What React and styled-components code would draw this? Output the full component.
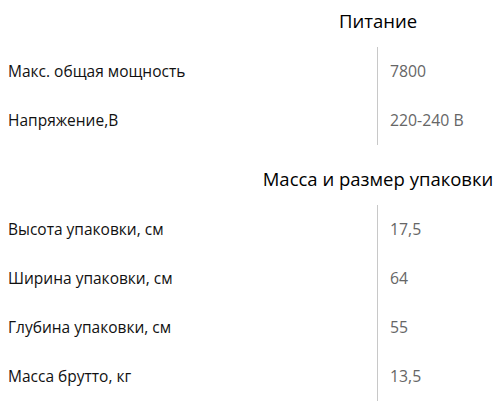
import React from "react";
import styled, { createGlobalStyle } from "styled-components";

const Global = createGlobalStyle`
  html, body { margin: 0; padding: 0; background: #fff; }
  body { font-family: "Open Sans", "Noto Sans", sans-serif; }
`;

const Page = styled.div`
  padding: 0 8px;
`;

const Section = styled.section`
  display: grid;
  grid-template-columns: 369px 1fr;
  & + & { margin-top: 13px; }
`;

const Heading = styled.h2`
  grid-column: 1 / -1;
  display: flex;
  justify-content: center;
  margin: 0;
  padding-left: 256px;
  height: 47px;
  line-height: 42px;
  font-size: 18.5px;
  font-weight: 400;
  color: #000;
  white-space: nowrap;
`;

const Label = styled.div`
  height: 49px;
  line-height: 49px;
  font-size: 15.5px;
  font-weight: 500;
  color: #111;
  white-space: nowrap;
`;

const Value = styled.div`
  height: 49px;
  line-height: 49px;
  font-size: 15.8px;
  color: #666;
  padding-left: 12px;
  border-left: 1px solid #c8c8c8;
  white-space: nowrap;
`;

const sections = [
  {
    title: "Питание",
    rows: [
      ["Макс. общая мощность", "7800"],
      ["Напряжение,В", "220-240 В"],
    ],
  },
  {
    title: "Масса и размер упаковки",
    rows: [
      ["Высота упаковки, см", "17,5"],
      ["Ширина упаковки, см", "64"],
      ["Глубина упаковки, см", "55"],
      ["Масса брутто, кг", "13,5"],
    ],
  },
];

export default function App() {
  return (
    <>
      <Global />
      <Page>
        {sections.map((s) => (
          <Section key={s.title}>
            <Heading>
              <span>{s.title}</span>
            </Heading>
            {s.rows.map(([l, v]) => (
              <React.Fragment key={l}>
                <Label>{l}</Label>
                <Value>{v}</Value>
              </React.Fragment>
            ))}
          </Section>
        ))}
      </Page>
    </>
  );
}
